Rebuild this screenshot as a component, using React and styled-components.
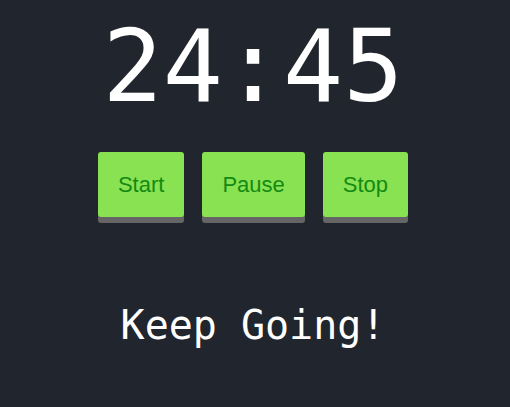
import styled, { createGlobalStyle } from "styled-components";

const GlobalStyle = createGlobalStyle`
  html, body {
    margin: 0;
    padding: 0;
    background: #21252d;
  }
`;

const Page = styled.div`
  min-height: 407px;
  display: flex;
  flex-direction: column;
  align-items: center;
  padding: 8px 4px 0 0;
  box-sizing: border-box;
  background: #21252d;
  font-family: "DejaVu Sans Mono", monospace;
  color: #ffffff;
`;

const Timer = styled.div`
  font-size: 100px;
  line-height: normal;
`;

const Controls = styled.div`
  display: flex;
  gap: 18px;
  margin-top: 27px;
`;

const Button = styled.button`
  font-family: "Liberation Sans", Arial, sans-serif;
  font-size: 22px;
  line-height: 25px;
  padding: 20px;
  border: none;
  border-radius: 3px;
  background: #89e251;
  color: #138a13;
  box-shadow: 0 6px 0 #656565;
  cursor: pointer;
`;

const Message = styled.div`
  margin-top: 85px;
  font-size: 40px;
  line-height: normal;
`;

const App = () => {
  return (
    <>
      <GlobalStyle />
      <Page>
        <Timer>24:45</Timer>
        <Controls>
          <Button>Start</Button>
          <Button>Pause</Button>
          <Button>Stop</Button>
        </Controls>
        <Message>Keep Going!</Message>
      </Page>
    </>
  );
};

export default App;
